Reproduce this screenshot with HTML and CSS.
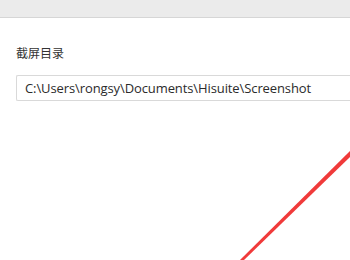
FILE: index.html
```html
<!DOCTYPE html>
<html lang="zh-CN">
<head>
    <meta charset="utf-8">
    <title>截屏目录</title>
    <link rel="stylesheet" href="styles.css">
</head>
<body>
    <div class="titlebar"></div>
    <div class="settings">
        <div class="label">截屏目录</div>
        <div class="path-input">C:\Users\rongsy\Documents\Hisuite\Screenshot</div>
    </div>

    <!-- red annotation stroke over the page -->
    <svg class="mark" width="350" height="260" viewBox="0 0 350 260">
        <polygon points="351,150 351,156 243,261 239,261" fill="#f03a3a"/>
    </svg>
</body>
</html>
```

FILE: styles.css
```css
body {
    margin: 0;
    background-color: #ffffff;
    font-family: "Open Sans", "Noto Sans CJK SC", sans-serif;
    color: #333333;
    overflow: hidden;
}

.titlebar {
    height: 17px;
    background-color: #ebebeb;
    border-bottom: 1px solid #d6d6d6;
}

.settings {
    padding: 27px 0 0 16px;
}

.label {
    font-size: 12px;
    line-height: 17px;
    color: #333333;
}

.path-input {
    margin-top: 13px;
    height: 24px;
    border: 1px solid #d9d9d9;
    border-right: none;
    border-radius: 2px 0 0 2px;
    padding-left: 8px;
    font-size: 13px;
    letter-spacing: -0.1px;
    line-height: 24px;
    color: #2b2b2b;
}

.mark {
    position: absolute;
    left: 0;
    top: 0;
}
```
